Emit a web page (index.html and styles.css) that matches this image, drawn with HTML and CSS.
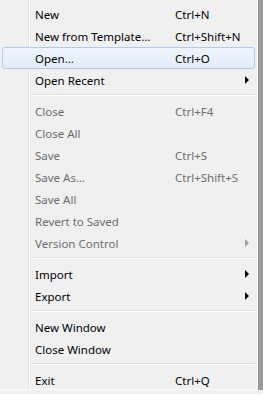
FILE: index.html
```html
<!DOCTYPE html>
<html lang="en">
<head>
  <meta charset="UTF-8" />
  <title>File Menu</title>
  <link rel="stylesheet" href="styles.css">
</head>
<body>
  <div class="menu">
    <div class="item"><span class="label">New</span><span class="key">Ctrl+N</span></div>
    <div class="item"><span class="label">New from Template...</span><span class="key">Ctrl+Shift+N</span></div>
    <div class="item hover"><span class="label">Open...</span><span class="key">Ctrl+O</span></div>
    <div class="item"><span class="label">Open Recent</span><span class="key"></span><span class="arrow"></span></div>
    <div class="sep"></div>
    <div class="item disabled"><span class="label">Close</span><span class="key">Ctrl+F4</span></div>
    <div class="item disabled"><span class="label">Close All</span><span class="key"></span></div>
    <div class="item disabled"><span class="label">Save</span><span class="key">Ctrl+S</span></div>
    <div class="item disabled"><span class="label">Save As...</span><span class="key">Ctrl+Shift+S</span></div>
    <div class="item disabled"><span class="label">Save All</span><span class="key"></span></div>
    <div class="item disabled"><span class="label">Revert to Saved</span><span class="key"></span></div>
    <div class="item disabled"><span class="label">Version Control</span><span class="key"></span><span class="arrow"></span></div>
    <div class="sep"></div>
    <div class="item"><span class="label">Import</span><span class="key"></span><span class="arrow"></span></div>
    <div class="item"><span class="label">Export</span><span class="key"></span><span class="arrow"></span></div>
    <div class="sep"></div>
    <div class="item"><span class="label">New Window</span><span class="key"></span></div>
    <div class="item"><span class="label">Close Window</span><span class="key"></span></div>
    <div class="sep"></div>
    <div class="item"><span class="label">Exit</span><span class="key">Ctrl+Q</span></div>
  </div>
</body>
</html>
```

FILE: styles.css
```css
/* Page */
body {
  margin: 0;
  background-color: #f0f0f0;
  font-family: 'Noto Sans', 'Liberation Sans', sans-serif;
  font-size: 11.5px;
  color: #000;
}

/* Menu box */
.menu {
  width: 258px;
  height: 390px;
  box-sizing: border-box;
  padding-top: 3px;
  background-color: #f0f0f0;
  border-right: 1px solid #fafafa;
  border-bottom: 1px solid #fafafa;
  box-shadow: 5px 5px 0 #9a9a9a, 5px -5px 0 #9a9a9a;
  /* gutter line next to the icon column */
  background-image: linear-gradient(to right,
    transparent 28px, #e2e3e3 28px, #e2e3e3 29px,
    #ffffff 29px, #ffffff 30px, transparent 30px);
}

/* Items */
.item {
  display: flex;
  align-items: center;
  height: 22px;
  margin: 0 2px;
  padding-left: 32px;
  box-sizing: border-box;
  border: 1px solid transparent;
  border-radius: 3px;
}

.item .label {
  width: 140px;
  white-space: nowrap;
}

.item .key {
  width: 70px;
  white-space: nowrap;
}

.item .arrow {
  width: 0;
  height: 0;
  border-top: 4px solid transparent;
  border-bottom: 4px solid transparent;
  border-left: 4px solid #000;
}

.item.hover {
  border-color: #aeccf1;
  background: linear-gradient(to bottom, #eef4fc, #e3edfa);
}

.item.disabled {
  color: #6d6d6d;
}

.item.disabled .arrow {
  border-left-color: #a0a0a0;
}

/* Separators */
.sep {
  height: 1px;
  margin: 3px 2px 4px 30px;
  border-bottom: 1px solid #ffffff;
  background-color: #e0e0e0;
}
```
